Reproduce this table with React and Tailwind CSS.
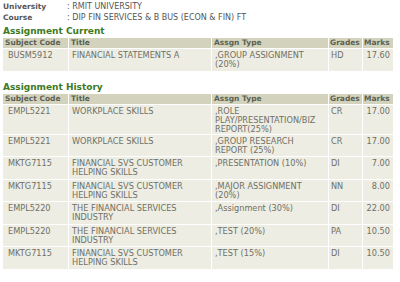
import React from "react";

const current = [
  { code: "BUSM5912", title: "FINANCIAL STATEMENTS A", type: ",GROUP ASSIGNMENT (20%)", grade: "HD", marks: "17.60" },
];

const history = [
  { code: "EMPL5221", title: "WORKPLACE SKILLS", type: ",ROLE PLAY/PRESENTATION/BIZ REPORT(25%)", grade: "CR", marks: "17.00" },
  { code: "EMPL5221", title: "WORKPLACE SKILLS", type: ",GROUP RESEARCH REPORT (25%)", grade: "CR", marks: "17.00" },
  { code: "MKTG7115", title: "FINANCIAL SVS CUSTOMER HELPING SKILLS", type: ",PRESENTATION (10%)", grade: "DI", marks: "7.00" },
  { code: "MKTG7115", title: "FINANCIAL SVS CUSTOMER HELPING SKILLS", type: ",MAJOR ASSIGNMENT (20%)", grade: "NN", marks: "8.00" },
  { code: "EMPL5220", title: "THE FINANCIAL SERVICES INDUSTRY", type: ",Assignment (30%)", grade: "DI", marks: "22.00" },
  { code: "EMPL5220", title: "THE FINANCIAL SERVICES INDUSTRY", type: ",TEST (20%)", grade: "PA", marks: "10.50" },
  { code: "MKTG7115", title: "FINANCIAL SVS CUSTOMER HELPING SKILLS", type: ",TEST (15%)", grade: "DI", marks: "10.50" },
];

function Table({ rows }) {
  return (
    <table className="table-fixed border-separate border-spacing-[1px] w-[392px] ml-[2px]">
      <colgroup>
        <col className="w-[65px]" />
        <col className="w-[142px]" />
        <col className="w-[116px]" />
        <col className="w-[33px]" />
        <col className="w-[30px]" />
      </colgroup>
      <thead>
        <tr className="bg-[#d3d3bd] text-[#5b6152] text-left text-[7.5px]">
          <th className="px-[2px] py-0 h-[10px] leading-[10px] font-bold">Subject Code</th>
          <th className="px-[2px] py-0 leading-[10px] font-bold">Title</th>
          <th className="px-[2px] py-0 leading-[10px] font-bold">Assgn Type</th>
          <th className="px-[1px] py-0 leading-[10px] font-bold">Grades</th>
          <th className="px-[1px] py-0 leading-[10px] font-bold">Marks</th>
        </tr>
      </thead>
      <tbody>
        {rows.map((r, i) => (
          <tr key={i} className="bg-[#ededE3] text-[#707066] align-top text-[8.2px]">
            <td className="h-[21.5px] pl-[5px] pt-[2px] pb-0 leading-[9px]">{r.code}</td>
            <td className="pl-[3px] pr-[2px] pt-[2px] pb-0 leading-[9px]">{r.title}</td>
            <td className="pl-[3px] pr-[2px] pt-[2px] pb-0 leading-[9px]">{r.type}</td>
            <td className="pl-[2px] pt-[2px] pb-0 leading-[9px]">{r.grade}</td>
            <td className="pr-[3px] pt-[2px] pb-0 leading-[9px] text-right">{r.marks}</td>
          </tr>
        ))}
      </tbody>
    </table>
  );
}

export default function App() {
  return (
    <div className="w-[400px] h-[282px] bg-white overflow-hidden font-['DejaVu_Sans',sans-serif] text-[#555]">
      <div className="pt-[1px] pl-[3px] leading-[11px]">
        <div className="flex">
          <span className="w-[64px] font-bold text-[7.5px] text-[#555]">University</span>
          <span className="text-[8px] text-[#555]">: RMIT UNIVERSITY</span>
        </div>
        <div className="flex">
          <span className="w-[64px] font-bold text-[7.5px] text-[#555]">Course</span>
          <span className="text-[8px] text-[#555]">: DIP FIN SERVICES &amp; B BUS (ECON &amp; FIN) FT</span>
        </div>
      </div>
      <div className="pl-[3px] mt-[3px] text-[9px] font-bold text-[#3c7a22] leading-[11px]">Assignment Current</div>
      <Table rows={current} />
      <div className="pl-[3px] mt-[10px] text-[9px] font-bold text-[#3c7a22] leading-[11px]">Assignment History</div>
      <Table rows={history} />
    </div>
  );
}
